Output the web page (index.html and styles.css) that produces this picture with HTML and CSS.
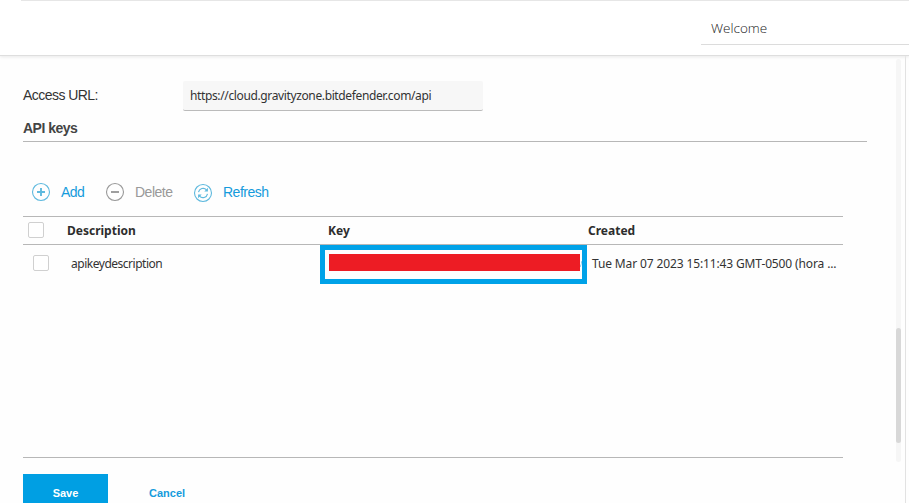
FILE: index.html
```html
<!DOCTYPE html>
<html lang="en">
<head>
<meta charset="utf-8">
<title>API keys</title>
<link rel="stylesheet" href="styles.css">
</head>
<body>
<header class="topbar"><div class="welcome"><span>Welcome</span></div></header>
<div class="body">
  <main class="content">
    <div class="field"><label for="url">Access URL:</label><div class="url" id="url"><span>https://cloud.gravityzone.bitdefender.com/api</span></div></div>
    <h2 class="section-title"><span>API keys</span></h2>
    <div class="toolbar">
      <a class="tool add"><svg viewBox="0 0 20 20"><circle cx="10" cy="10" r="8.5"/><path class="thick" d="M10 6v8M6 10h8"/></svg><span>Add</span></a>
      <a class="tool delete"><svg viewBox="0 0 20 20"><circle cx="10" cy="10" r="8.5"/><path class="thick" d="M6 10h8"/></svg><span>Delete</span></a>
      <a class="tool refresh"><svg viewBox="0 0 20 20"><circle cx="10" cy="10" r="8.5"/><path d="M5.5 9.2A4.7 4.7 0 0 1 13.5 6.8M14.5 10.8A4.7 4.7 0 0 1 6.5 13.2"/><path class="tip" d="M14.9 4.8v3.6h-3.6zM5.1 15.2v-3.6h3.6z"/></svg><span>Refresh</span></a>
    </div>
    <div class="grid">
      <div class="row head"><i class="check"></i><b class="desc"><span>Description</span></b><b class="key"><span>Key</span></b><b class="created"><span>Created</span></b></div>
      <div class="row item"><i class="check"></i><div class="desc"><span>apikeydescription</span></div><div class="key-frame"><div class="redacted"></div><i class="remnant"></i></div><div class="created"><span>Tue Mar 07 2023 15:11:43 GMT-0500 (hora ...</span></div></div>
    </div>
    <div class="actions"><button class="save">Save</button><a class="cancel">Cancel</a></div>
  </main>
  <div class="scroll"><div class="thumb"></div></div>
  <div class="edge"></div>
</div>
</body>
</html>
```
FILE: styles.css
```css
* { box-sizing: border-box; }
body { margin: 0; height: 503px; overflow: hidden; background: #fefefe; color: #333; font: 12px/16px "Noto Sans", sans-serif; display: flex; flex-direction: column; }
span { white-space: nowrap; }
.topbar { height: 55px; flex: none; background: linear-gradient(#e6e6e6, #e6e6e6) 21px 0 / 100% 1px no-repeat #fff; box-shadow: 0 1px 0 #dedede, 0 2px 3px #e8e8e8; display: flex; justify-content: flex-end; z-index: 1; }
.welcome { width: 208px; height: 45px; padding: 20px 0 0 10px; border-bottom: 1px solid #dcdcdc; font: 300 13.5px/17px "Open Sans", sans-serif; color: #222; }
.body { flex: 1; display: flex; min-height: 0; }
.content { width: 896px; padding: 26px 28px 0 23px; }
.field { display: flex; height: 30px; font: 14px/29px "Liberation Sans", sans-serif; }
.field label { width: 160px; letter-spacing: -.54px; }
.url { width: 300px; height: 30px; padding-left: 7px; background: #f7f7f7; border-bottom: 1px solid #bbb; border-radius: 2px; font: 12px/29px "Noto Sans", sans-serif; letter-spacing: -.37px; }
.section-title { width: 844px; height: 31px; margin: 0; border-bottom: 1px solid #b7b7b7; font: bold 14px/35px "Liberation Sans", sans-serif; letter-spacing: -.5px; color: #444; }
.toolbar { height: 74px; padding: 40px 0 0 8px; display: flex; font: 14px/20px "Liberation Sans", sans-serif; letter-spacing: -.5px; color: #159bdc; }
.tool { display: flex; height: 21px; }
.tool svg { width: 20px; height: 20px; margin-right: 10px; flex: none; fill: none; stroke: #5eb9de; stroke-width: 1.1; }
.refresh svg { margin-top: 1px; }
.tool .thick { stroke-width: 1.9; }
.tool .tip { fill: #5eb9de; stroke: none; }
.add { width: 74px; }
.delete { width: 88px; color: #999; }
.delete svg { stroke: #999; }
.grid { width: 820px; height: 242px; border-top: 1px solid #b7b7b7; border-bottom: 1px solid #b7b7b7; }
.row { display: flex; }
.head { height: 28px; border-bottom: 1px solid #b7b7b7; line-height: 27px; color: #2d2d2d; }
.check { flex: none; width: 16px; height: 16px; border: 1px solid #d0d0d0; border-radius: 2px; background: #fff; }
.head .check { margin: 5px 0 0 5px; }
.head .desc { width: 261px; margin-left: 23px; }
.head .key { width: 260px; }
.item .check { margin: 10px 0 0 10px; }
.item .desc { width: 249px; margin-left: 22px; line-height: 37px; letter-spacing: -.48px; }
.key-frame { width: 267px; height: 39px; border: 5px solid #00a2e8; padding: 4px; display: flex; }
.redacted { width: 251px; height: 17px; flex: none; background: #ed1c24; }
.remnant { width: 2px; height: 6px; flex: none; margin-top: 7px; background: linear-gradient(105deg, transparent 35%, #8cc9e8 50%, transparent 80%); }
.item .created { margin-left: 5px; line-height: 37px; letter-spacing: -.13px; }
.actions { display: flex; padding-top: 16px; font: bold 11px/38px "Liberation Sans", sans-serif; }
.save { width: 85px; height: 38px; border: 0; padding: 0; background: #009fe3; color: #fff; font: inherit; }
.cancel { margin-left: 41px; color: #159bdc; }
.scroll { width: 5px; height: 403px; margin-top: 4px; border-radius: 3px; background: #f6f6f6; padding-top: 269px; }
.thumb { width: 5px; height: 115px; border-radius: 3px; background: #d8d8d8; }
.edge { width: 1px; margin-left: 4px; background: #e2e2e2; }
```
